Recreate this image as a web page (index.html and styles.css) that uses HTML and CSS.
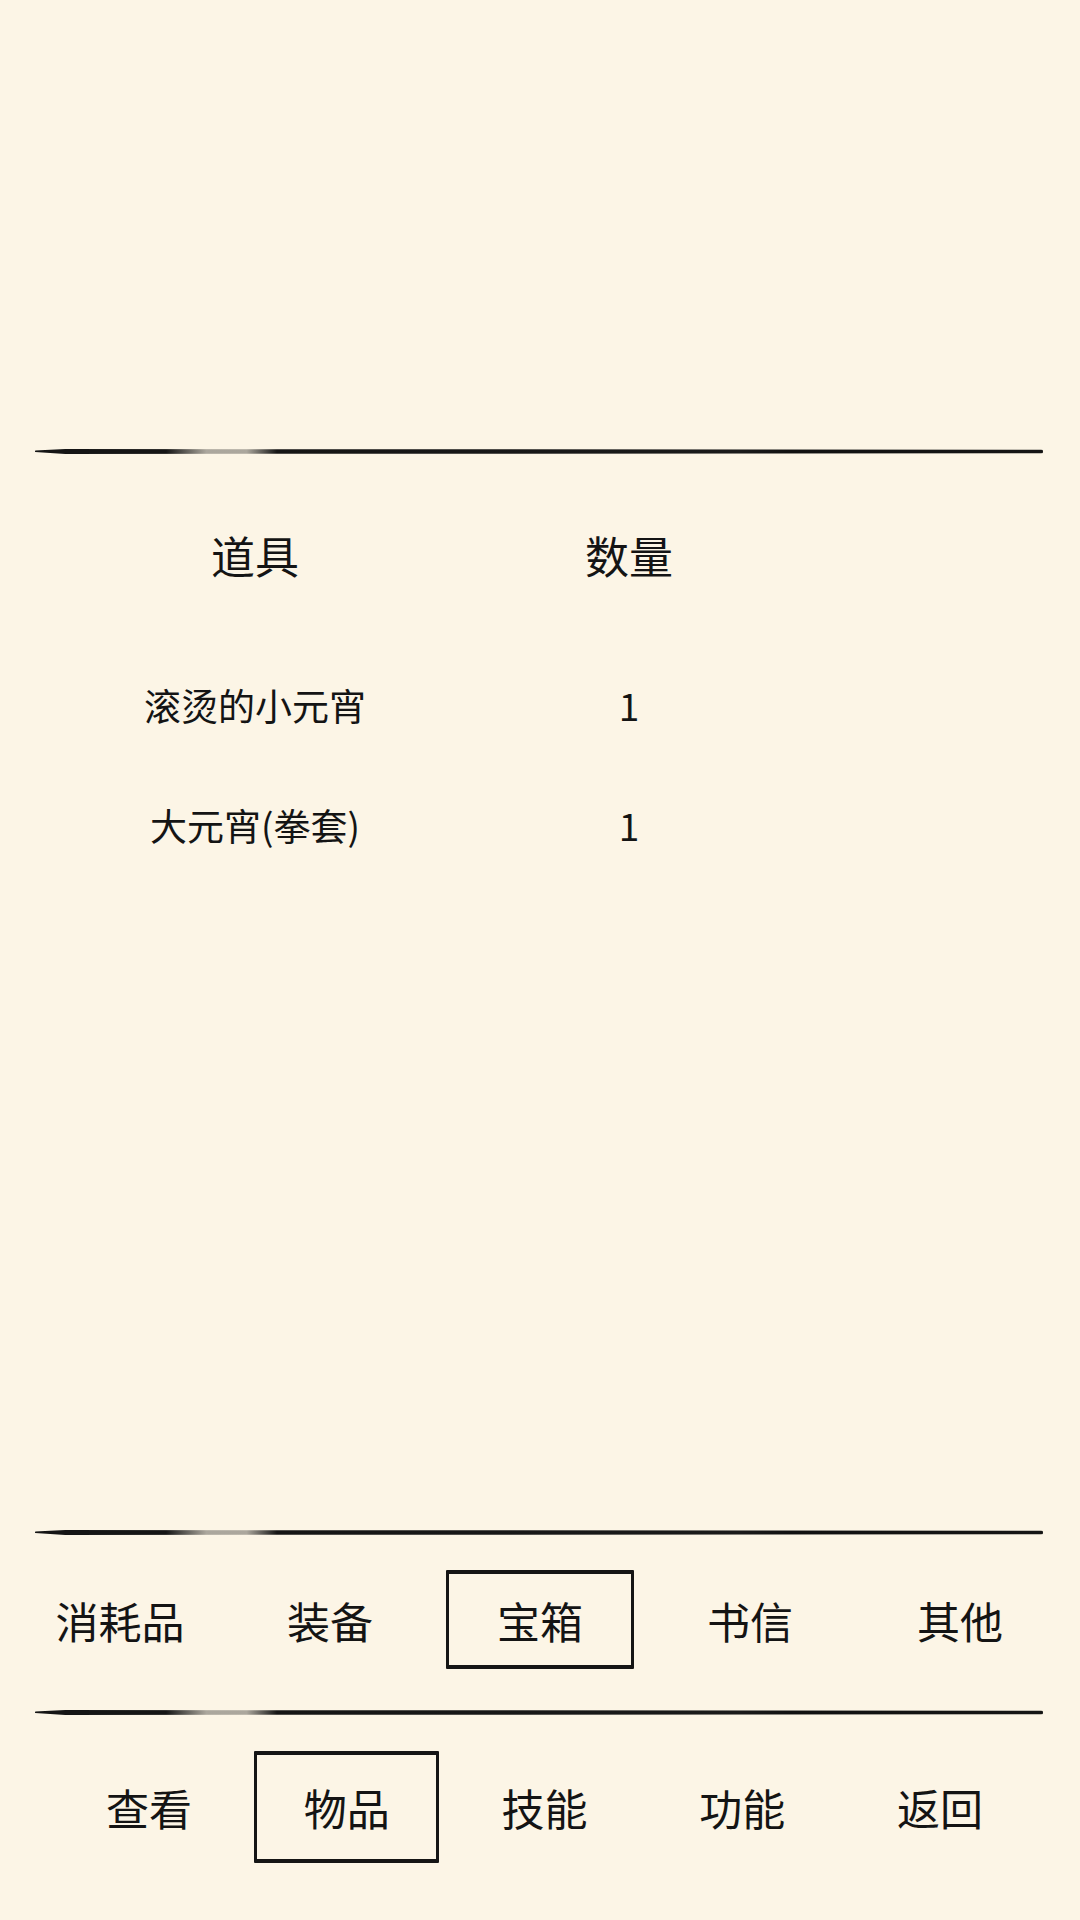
FILE: index.html
```html
<!DOCTYPE html>
<html lang="zh-CN">
<head>
<meta charset="utf-8">
<title>物品</title>
<link rel="stylesheet" href="styles.css">
</head>
<body>
<div class="screen">
  <div class="top-space"></div>
  <div class="brush"></div>
  <div class="table">
    <div class="row head">
      <div class="c1">道具</div>
      <div class="c2">数量</div>
    </div>
    <div class="row item">
      <div class="c1">滚烫的小元宵</div>
      <div class="c2">1</div>
    </div>
    <div class="row item">
      <div class="c1">大元宵(拳套)</div>
      <div class="c2">1</div>
    </div>
  </div>
  <div class="brush"></div>
  <div class="tabs">
    <div class="tab">消耗品</div>
    <div class="tab">装备</div>
    <div class="tab active"><span class="box">宝箱</span></div>
    <div class="tab">书信</div>
    <div class="tab">其他</div>
  </div>
  <div class="brush"></div>
  <div class="nav">
    <div class="navitem">查看</div>
    <div class="navitem active"><span class="box">物品</span></div>
    <div class="navitem">技能</div>
    <div class="navitem">功能</div>
    <div class="navitem">返回</div>
  </div>
</div>
</body>
</html>
```
FILE: styles.css
```css
html, body {
  margin: 0;
  padding: 0;
  background: #fcf5e6;
}
body {
  font-family: "Noto Sans CJK SC", "Noto Sans", sans-serif;
  color: #141414;
}
.screen {
  width: 1080px;
  height: 1920px;
  display: flex;
  flex-direction: column;
  overflow: hidden;
}
.top-space {
  height: 449px;
  flex: none;
}
.brush {
  flex: none;
  height: 5px;
  margin: 0 37px 0 35px;
  border-radius: 3px;
  background: linear-gradient(to right,
    #151515 0%, #151515 13%,
    rgba(21,21,21,0.35) 17%, rgba(21,21,21,0.35) 21%,
    #151515 24%, #1a1a1a 70%, #111 75%, #151515 100%);
  clip-path: polygon(0 30%, 3% 0, 100% 15%, 100% 85%, 3% 100%, 0 60%);
}
.table {
  flex: 1;
  padding-top: 41px;
}
.row {
  display: grid;
  grid-template-columns: 510px 238px;
  text-align: center;
  line-height: 120px;
  height: 120px;
}
.row.head {
  font-size: 44px;
  margin-bottom: 30px;
}
.row.item {
  font-size: 37px;
}
.tabs {
  flex: none;
  height: 175px;
  padding: 0 15px 6px;
  box-sizing: border-box;
  display: grid;
  grid-template-columns: repeat(5, 1fr);
  align-items: center;
  font-size: 43px;
}
.tab, .navitem {
  display: flex;
  justify-content: center;
  align-items: center;
  text-align: center;
}
.tabs .box {
  width: 182px;
  height: 91px;
}
.box {
  display: flex;
  align-items: center;
  justify-content: center;
  border: 3px solid #151515;
  border-top-width: 4px;
  border-bottom-width: 4px;
  border-radius: 1px;
}
.nav {
  flex: none;
  height: 205px;
  padding: 38px 41px 0 50px;
  box-sizing: border-box;
  display: grid;
  grid-template-columns: repeat(5, 1fr);
  grid-template-rows: 112px;
  font-size: 43px;
}
.navitem {
  padding-bottom: 4px;
}
.nav .box {
  width: 179px;
  height: 104px;
}
```
